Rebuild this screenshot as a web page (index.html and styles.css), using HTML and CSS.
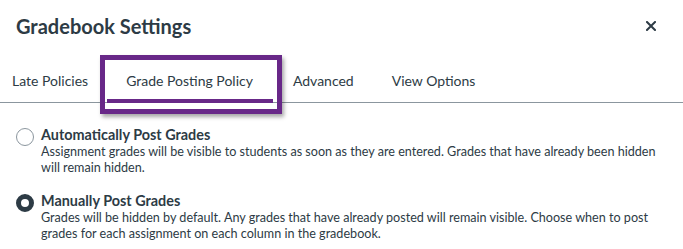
FILE: index.html
```html
<!DOCTYPE html>
<html>
<head>
<meta charset="utf-8">
<link rel="stylesheet" href="styles.css">
</head>
<body>
<div class="modal">
  <header class="header">
    <h1 class="title">Gradebook Settings</h1>
    <button class="close" aria-label="Close">
      <svg width="10" height="10" viewBox="0 0 10 10"><path d="M1 1L9 9M9 1L1 9" stroke="#2d3b45" stroke-width="2" stroke-linecap="square"/></svg>
    </button>
  </header>
  <nav class="tabs">
    <div class="tab">Late Policies</div>
    <div class="tab selected">Grade Posting Policy<span class="highlight"></span></div>
    <div class="tab">Advanced</div>
    <div class="tab">View Options</div>
  </nav>
  <div class="options">
    <div class="option">
      <span class="radio"></span>
      <div class="text">
        <div class="label">Automatically Post Grades</div>
        <div class="desc">Assignment grades will be visible to students as soon as they are entered. Grades that have already been hidden will remain hidden.</div>
      </div>
    </div>
    <div class="option">
      <span class="radio checked"></span>
      <div class="text">
        <div class="label">Manually Post Grades</div>
        <div class="desc">Grades will be hidden by default. Any grades that have already posted will remain visible. Choose when to post grades for each assignment on each column in the gradebook.</div>
      </div>
    </div>
  </div>
</div>
</body>
</html>
```
FILE: styles.css
```css
* { box-sizing: border-box; }
body {
  margin: 0;
  background: #fff;
  font-family: Lato, "Noto Sans", sans-serif;
  color: #2d3b45;
}
.modal { width: 683px; }
.header {
  display: flex;
  align-items: center;
  justify-content: space-between;
  height: 52px;
  padding: 0 27px 0 16px;
}
.title {
  margin: 0;
  font-size: 20px;
  font-weight: 700;
  line-height: 1;
}
.close {
  border: 0;
  background: none;
  padding: 0;
  display: flex;
}
.tabs {
  display: flex;
  height: 51px;
  border-bottom: 1px solid #8b969e;
  align-items: stretch;
}
.tab {
  position: relative;
  padding: 20px 19px 0;
  font-size: 14px;
  line-height: 17px;
  color: #2d3b45;
}
.tab:first-child { padding-left: 12px; }
.tab.selected { padding-right: 21px; }
.tab.selected::after {
  content: "";
  position: absolute;
  left: 0;
  right: 1px;
  bottom: -1px;
  height: 4px;
  background: #682888;
}
.highlight {
  position: absolute;
  left: -7px;
  top: 3px;
  width: 182px;
  height: 59px;
  border: 5px solid #682888;
  box-shadow: 2px 3px 4px rgba(0,0,0,0.35);
  pointer-events: none;
}
.options {
  padding: 20px 8px 0 16px;
  display: flex;
  flex-direction: column;
  gap: 13px;
}
.option {
  display: flex;
  gap: 7px;
}
.radio {
  flex: none;
  width: 18px;
  height: 18px;
  border-radius: 50%;
  border: 1px solid #8b969e;
  margin-top: 5px;
  background: #fff;
}
.radio.checked {
  border: 5px solid #2d3b45;
}
.label {
  font-size: 14.4px;
  font-weight: 700;
  line-height: 18px;
  padding-top: 3px;
}
.desc {
  font-size: 12.6px;
  line-height: 16px;
}
```
